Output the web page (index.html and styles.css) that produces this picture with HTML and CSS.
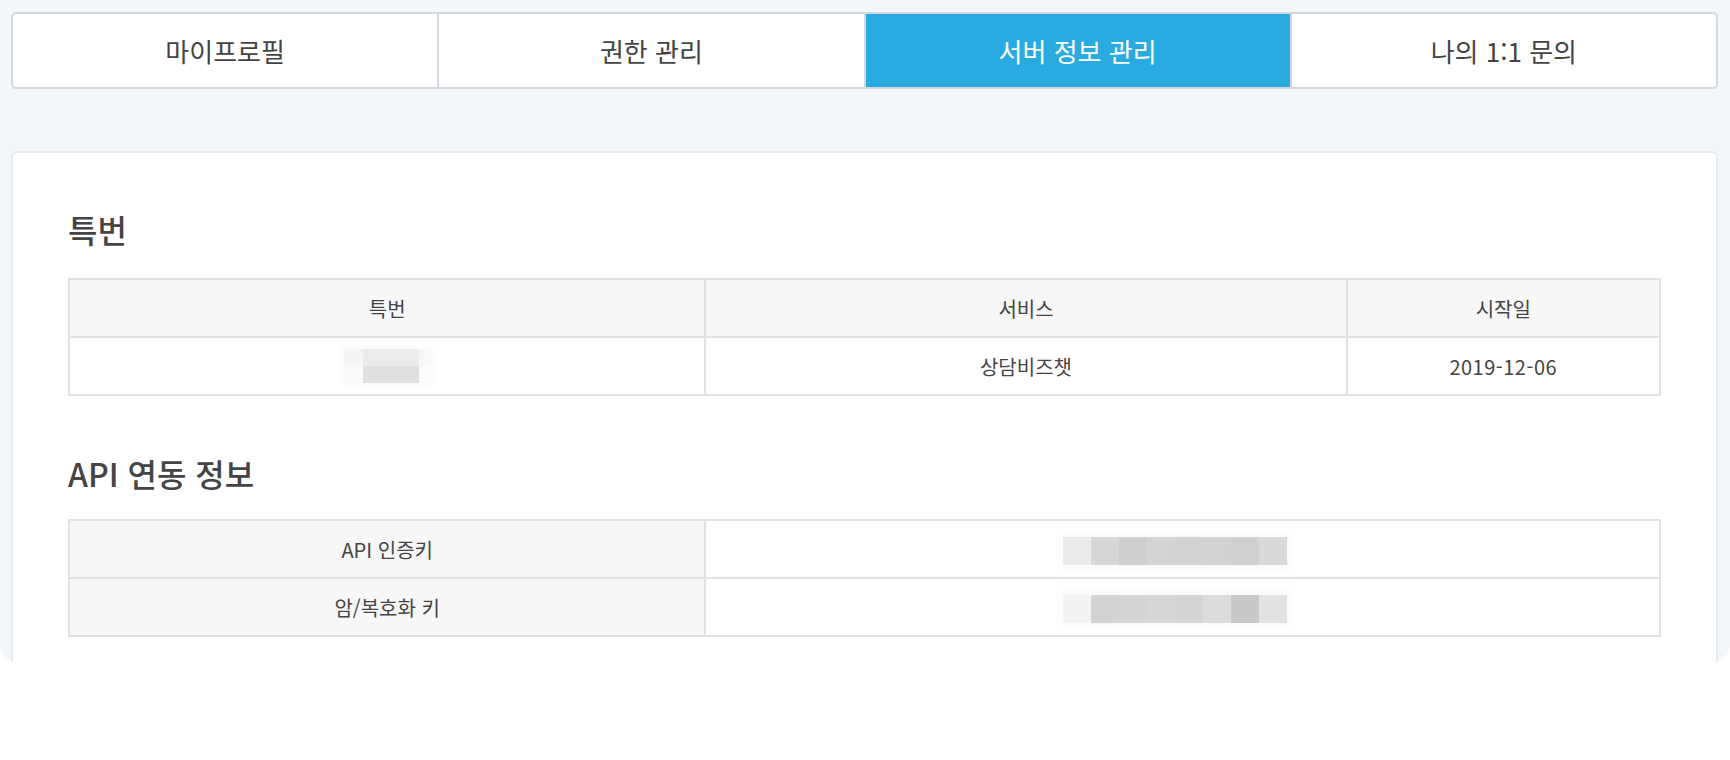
FILE: index.html
```html
<!DOCTYPE html>
<html lang="ko">
<head>
<meta charset="utf-8">
<title>서버 정보 관리</title>
<link rel="stylesheet" href="styles.css">
</head>
<body>
<div class="page">
  <nav class="tabs">
    <a class="tab">마이프로필</a>
    <a class="tab">권한 관리</a>
    <a class="tab active">서버 정보 관리</a>
    <a class="tab">나의 1:1 문의</a>
  </nav>

  <section class="card">
    <h2 class="title">특번</h2>
    <table class="grid">
      <colgroup><col class="w40"><col class="w40b"><col class="w20"></colgroup>
      <thead>
        <tr><th>특번</th><th>서비스</th><th>시작일</th></tr>
      </thead>
      <tbody>
        <tr>
          <td>
            <span class="mosaic mosaic-small">
              <i class="c1"></i><i class="c2"></i><i class="c2"></i><i class="c3"></i>
              <i class="c4"></i><i class="c5"></i><i class="c5"></i><i class="c6"></i>
            </span>
          </td>
          <td>상담비즈챗</td>
          <td class="date">2019-12-06</td>
        </tr>
      </tbody>
    </table>

    <h2 class="title second">API 연동 정보</h2>
    <table class="grid kv">
      <colgroup><col class="w40"><col class="w60"></colgroup>
      <tbody>
        <tr>
          <th>API 인증키</th>
          <td>
            <span class="mosaic mosaic-row">
              <i style="background:#ebebeb"></i><i style="background:#d7d7d7"></i><i style="background:#cfcfcf"></i><i style="background:#d4d4d4"></i><i style="background:#d3d3d3"></i><i style="background:#d2d2d2"></i><i style="background:#d0d0d0"></i><i style="background:#dadada"></i>
            </span>
          </td>
        </tr>
        <tr>
          <th>암/복호화 키</th>
          <td>
            <span class="mosaic mosaic-row">
              <i style="background:#f3f3f3"></i><i style="background:#d3d3d3"></i><i style="background:#d5d5d5"></i><i style="background:#d7d7d7"></i><i style="background:#d4d4d4"></i><i style="background:#dcdcdc"></i><i style="background:#c8c8c8"></i><i style="background:#e2e2e2"></i>
            </span>
          </td>
        </tr>
      </tbody>
    </table>
  </section>
</div>
</body>
</html>
```

FILE: styles.css
```css
* { box-sizing: border-box; }

html, body {
  margin: 0;
  padding: 0;
  background: #ffffff;
  font-family: "Noto Sans CJK KR", "Noto Sans", sans-serif;
  color: #444444;
}

.page {
  height: 662px;
  overflow: hidden;
  background: #f3f7fa;
  padding: 12px 12px 0 11px;
  border-radius: 0 0 18px 18px;
}

.tabs {
  display: flex;
  height: 77px;
  border: 2px solid #d4d8e0;
  border-radius: 5px;
  background: #ffffff;
  overflow: hidden;
}

.tab {
  flex: 1 1 0;
  display: flex;
  align-items: center;
  justify-content: center;
  font-size: 26px;
  color: #444444;
  text-decoration: none;
  border-left: 2px solid #d4d8e0;
}

.tab:first-child { border-left: 0; }

.tab.active {
  background: #29abe2;
  color: #ffffff;
}

.card {
  margin-top: 62px;
  background: #ffffff;
  border: 2px solid #e7eaf1;
  border-radius: 6px;
  padding: 60px 55px 56px 55px;
}

.title {
  margin: 0 0 33px 0;
  font-size: 32px;
  line-height: 1;
  font-weight: 500;
  color: #444444;
}

.title.second { margin-top: 61px; margin-bottom: 30px; }

.grid {
  width: 100%;
  border-collapse: collapse;
  table-layout: fixed;
  font-size: 20px;
}

.w40 { width: 40%; }
.w40b { width: 40.3%; }
.w60 { width: 60%; }
.w20 { width: 19.7%; }

.grid th,
.grid td {
  height: 58px;
  padding: 0 10px;
  border: 2px solid #e1e1e1;
  text-align: center;
  vertical-align: middle;
  font-weight: 400;
  color: #444444;
}

.grid th { background: #f7f7f7; }
.grid td { background: #ffffff; }

.grid td.date { letter-spacing: 0.5px; }

.mosaic {
  display: inline-grid;
  vertical-align: middle;
}

.mosaic i { display: block; }

.mosaic-small {
  grid-template-columns: 19px 28px 28px 12px;
  grid-template-rows: 17px 17px;
  box-shadow: 0 0 6px 4px #fcfcfc;
}

.mosaic-small .c1 { background: #f5f5f5; }
.mosaic-small .c2 { background: #ececec; }
.mosaic-small .c3 { background: #f8f8f8; }
.mosaic-small .c4 { background: #f9f9f9; }
.mosaic-small .c5 { background: #e0e0e0; }
.mosaic-small .c6 { background: #fbfbfb; }

.mosaic-row {
  grid-template-columns: repeat(8, 28px);
  grid-template-rows: 28px;
  box-shadow: 0 0 8px 6px #fbfbfb;
  margin-right: 16px;
}
```
